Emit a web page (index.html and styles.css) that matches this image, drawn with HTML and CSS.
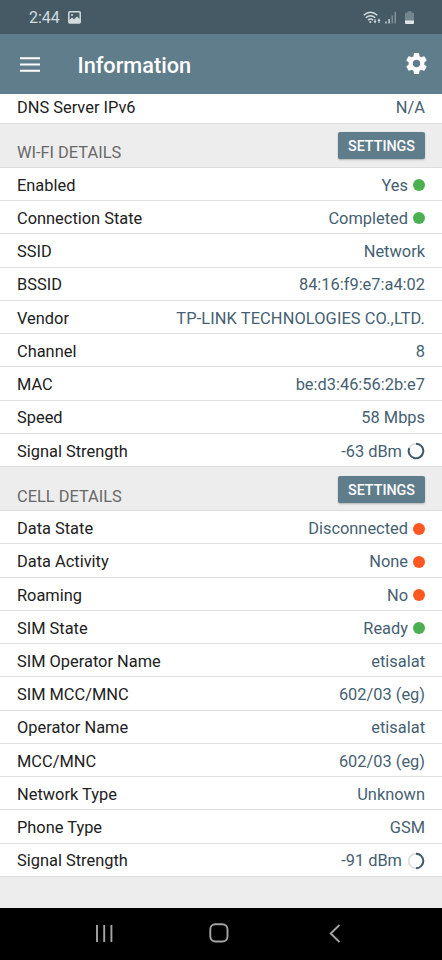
FILE: index.html
```html
<!DOCTYPE html>
<html lang="en">
<head>
<meta charset="utf-8">
<title>Information</title>
<link rel="stylesheet" href="styles.css">
</head>
<body>
<div class="status">
  <span class="time">2:44</span>
  <svg class="photo" width="13" height="13" viewBox="0 0 13 13"><rect x=".8" y=".8" width="11.4" height="11.2" rx="1" fill="none" stroke="#d3dadd" stroke-width="1.500"/><path d="M1 9.200 4 6.500 6 8.200 9 5.400 12.200 8.400V12H1z" fill="#d3dadd"/><circle cx="4" cy="3.900" r="1" fill="#d3dadd"/></svg>
  <svg class="signals" width="53" height="16" viewBox="0 0 53 16"><g fill="none" stroke="#d3dadd" stroke-width="1.400"><path d="M.7 5.200Q7.500-.9 14.300 5.200M2.800 7.700Q7.500 3.600 12.200 7.700M5 10.100Q7.500 8 10 10.100"/></g><circle cx="7.300" cy="12" r="1.100" fill="#d3dadd"/><path d="M10.500 11h1V9h1v2h1L12 13.600zM14.500 11h1v2h1v-2h1L16 8.200z" fill="#d3dadd"/><path d="M22.300 11.400h1.400v2.100h-1.400zM25.400 9h1.400v4.500h-1.400z" fill="#d3dadd"/><path d="M28.500 5.500h1.400v8h-1.400zM31.500 2h1.500v11.500h-1.500z" fill="#82919a"/><path d="M44.500 1.200h4v1.500h1.500q1 0 1 1V11h-9V3.700q0-1 1-1h1.500z" fill="#75868f"/><path d="M42 10.500h9v2.600q0 1-1 1h-7q-1 0-1-1z" fill="#dfe5e7"/></svg>
</div>
<header class="bar">
  <svg class="menu" width="20" height="15" viewBox="0 0 20 15"><path d="M0 1.200h20M0 7.500h20M0 13.800h20" stroke="#fff" stroke-width="2"/></svg>
  <h1>Information</h1>
  <svg class="gear" width="25" height="25" viewBox="0 0 24 24"><path fill="#fff" d="M19.430 12.980c.04-.32.07-.64.07-.98s-.03-.66-.07-.98l2.110-1.650c.19-.15.24-.42.12-.64l-2-3.460c-.12-.22-.39-.3-.61-.22l-2.490 1c-.52-.4-1.080-.73-1.690-.98l-.38-2.650C14.460 2.180 14.250 2 14 2h-4c-.25 0-.46.18-.49.42l-.38 2.650c-.61.25-1.170.59-1.690.98l-2.490-1c-.23-.09-.49 0-.61.22l-2 3.460c-.13.22-.07.49.12.64l2.110 1.650c-.04.32-.07.65-.07.98s.03.66.07.98l-2.110 1.650c-.19.15-.24.42-.12.64l2 3.460c.12.22.39.3.61.22l2.490-1c.52.4 1.080.73 1.690.98l.38 2.650c.03.24.24.42.49.42h4c.25 0 .46-.18.49-.42l.38-2.650c.61-.25 1.170-.59 1.690-.98l2.490 1c.23.09.49 0 .61-.22l2-3.460c.12-.22.07-.49-.12-.64zM12 15.500A3.500 3.500 0 1 1 12 8.500a3.500 3.500 0 0 1 0 7z"/></svg>
</header>
<main>
  <div class="row first"><span>DNS Server IPv6</span><b>N/A</b></div>
  <div class="section"><h2>WI-FI DETAILS</h2><button>SETTINGS</button></div>
  <div class="row"><span>Enabled</span><b>Yes<i class="dot on"></i></b></div>
  <div class="row"><span>Connection State</span><b>Completed<i class="dot on"></i></b></div>
  <div class="row"><span>SSID</span><b>Network</b></div>
  <div class="row"><span>BSSID</span><b>84:16:f9:e7:a4:02</b></div>
  <div class="row"><span>Vendor</span><b class="vendor">TP-LINK TECHNOLOGIES CO.,LTD.</b></div>
  <div class="row"><span>Channel</span><b>8</b></div>
  <div class="row"><span>MAC</span><b>be:d3:46:56:2b:e7</b></div>
  <div class="row"><span>Speed</span><b>58 Mbps</b></div>
  <div class="row"><span>Signal Strength</span><b>-63 dBm<svg class="ring" width="18" height="18" viewBox="0 0 18 18"><circle cx="9" cy="9" r="7.300" fill="none" stroke="#dde1e4" stroke-width="1.900"/><path d="M9 1.700A7.300 7.300 0 1 1 2.300 6.100" fill="none" stroke="#3f5a6b" stroke-width="2"/></svg></b></div>
  <div class="section"><h2>CELL DETAILS</h2><button>SETTINGS</button></div>
  <div class="row"><span>Data State</span><b>Disconnected<i class="dot off"></i></b></div>
  <div class="row"><span>Data Activity</span><b>None<i class="dot off"></i></b></div>
  <div class="row"><span>Roaming</span><b>No<i class="dot off"></i></b></div>
  <div class="row"><span>SIM State</span><b>Ready<i class="dot on"></i></b></div>
  <div class="row"><span>SIM Operator Name</span><b>etisalat</b></div>
  <div class="row"><span>SIM MCC/MNC</span><b>602/03 (eg)</b></div>
  <div class="row"><span>Operator Name</span><b>etisalat</b></div>
  <div class="row"><span>MCC/MNC</span><b>602/03 (eg)</b></div>
  <div class="row"><span>Network Type</span><b>Unknown</b></div>
  <div class="row"><span>Phone Type</span><b>GSM</b></div>
  <div class="row"><span>Signal Strength</span><b>-91 dBm<svg class="ring" width="18" height="18" viewBox="0 0 18 18"><circle cx="9" cy="9" r="7.300" fill="none" stroke="#dde1e4" stroke-width="1.900"/><path d="M9 1.700A7.300 7.300 0 0 1 9 16.300" fill="none" stroke="#3f5a6b" stroke-width="2"/></svg></b></div>
</main>
<nav class="nav">
  <svg width="18" height="19" viewBox="0 0 18 19"><path d="M2 1v17M9.200 1v17M16.400 1v17" stroke="#a5a5a5" stroke-width="1.900"/></svg>
  <svg class="home" width="20" height="20" viewBox="0 0 20 20"><rect x="1.300" y="1.300" width="17.200" height="17.200" rx="5" fill="none" stroke="#a5a5a5" stroke-width="1.900"/></svg>
  <svg width="12" height="19" viewBox="0 0 12 19"><path d="M10.500 1 1.700 9.500l8.800 8.500" fill="none" stroke="#a5a5a5" stroke-width="1.900"/></svg>
</nav>
</body>
</html>
```
FILE: styles.css
```css
* { box-sizing: border-box; }
body {
  margin: 0;
  width: 442px;
  height: 960px;
  display: flex;
  flex-direction: column;
  overflow: hidden;
  background: #ededed;
  font: 16.4px/20px Roboto, sans-serif;
  color: #212121;
}
.status {
  height: 34px;
  padding: 1px 26px 0 29px;
  display: flex;
  align-items: center;
  background: #455a64;
  color: #d3dadd;
  font-size: 16px;
}
.photo { margin-left: 8px; }
.signals { margin-left: auto; }
.bar {
  height: 60px;
  padding: 0 13.500px 0 20px;
  display: flex;
  align-items: center;
  background: #607d8b;
  color: #fff;
}
.bar h1 {
  margin: 3px 0 0 37.500px;
  font-size: 21.700px;
  font-weight: 500;
}
.gear { margin: -1px 0 0 auto; }
main { flex: 1; }
.row {
  height: 33.240px;
  padding: 3.500px 17px 0;
  display: flex;
  align-items: center;
  justify-content: space-between;
  background: #fff;
  border-bottom: 1px solid #dedede;
}
.row.first { height: 29.700px; padding-top: 0; padding-bottom: 1px; }
.row b {
  display: flex;
  align-items: center;
  font-weight: 400;
  color: #465f72;
}
.row .vendor { letter-spacing: .1px; }
.dot {
  width: 12px;
  height: 12px;
  margin: -1px 0 0 5px;
  border-radius: 50%;
}
.on { background: #4caf50; }
.off { background: #ff5722; }
.ring { margin: -1px 0 0 5px; }
.section {
  height: 44.200px;
  padding: 0 17px;
  display: flex;
  align-items: center;
  justify-content: space-between;
  border-bottom: 1px solid #dcdcdc;
}
.section h2 {
  margin: 16px 0 0;
  font-size: 16.400px;
  font-weight: 400;
  color: #686868;
}
.section button {
  width: 87px;
  height: 27px;
  margin-top: 1px;
  padding: 1px 0 0;
  border: 0;
  border-radius: 2px;
  background: #607d8b;
  box-shadow: 0 1px 2px rgba(0, 0, 0, .25);
  color: #fff;
  font: 500 14.300px/26px Roboto, sans-serif;
}
.nav {
  height: 52px;
  padding: 0 101px 2px 95px;
  display: flex;
  align-items: center;
  justify-content: space-between;
  background: #000;
}
.home { margin-right: 4px; }
```
